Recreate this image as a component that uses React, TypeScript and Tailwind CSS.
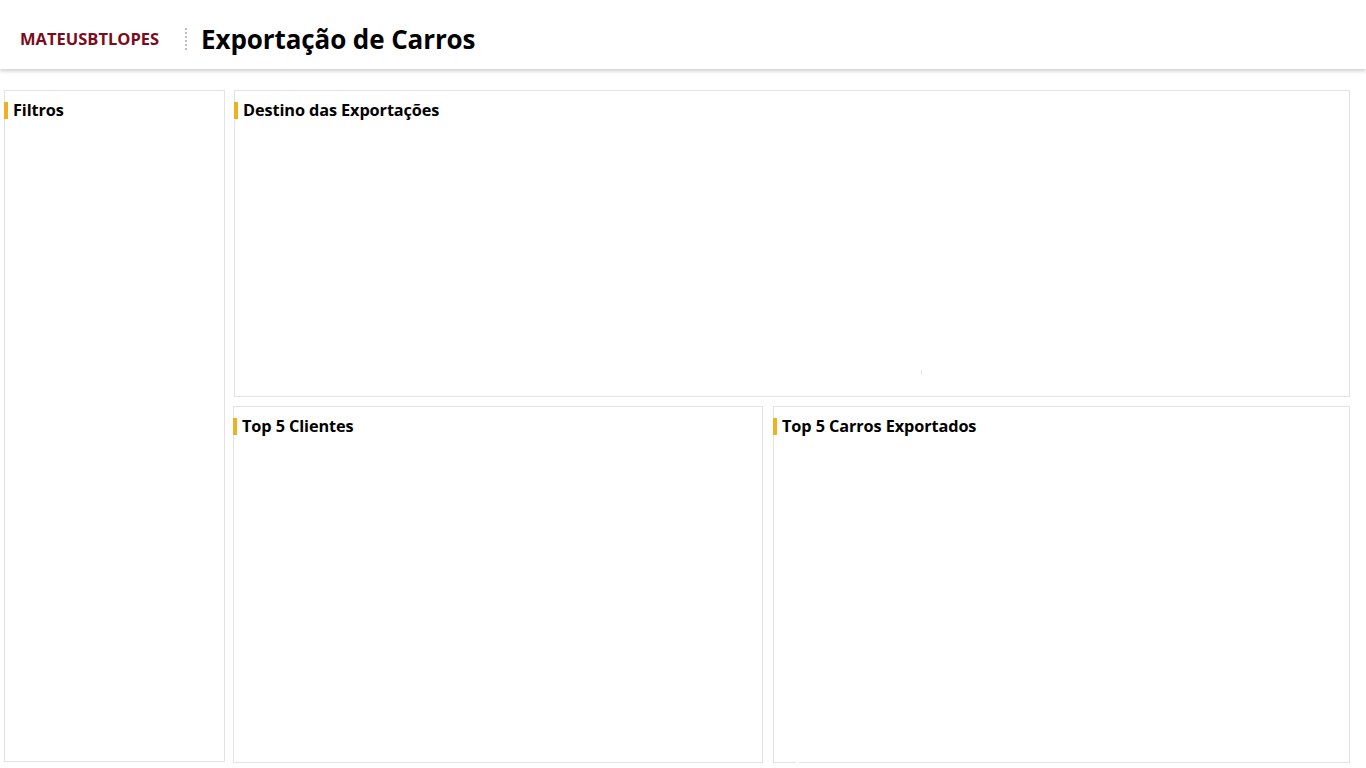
import type { ReactNode } from "react";

const font = { fontFamily: '"Open Sans", "Noto Sans", Arial, sans-serif' };

function Panel({ title, className, children }: { title: string; className?: string; children?: ReactNode }) {
    return (
        <section className={`relative border border-[#e3e3e3] bg-white ${className ?? ""}`}>
            <h2 className="-ml-px mt-[11px] border-l-[4px] border-[#efb122] pl-[5px] text-[16.3px] font-bold leading-[17px] tracking-[-0.1px] text-black">
                {title}
            </h2>
            {children}
        </section>
    );
}

export default function App() {
    return (
        <div className="min-h-[768px] w-full bg-white" style={font}>
            <header className="flex h-[69px] items-center bg-white pl-[20px] pt-[9px] shadow-[0_2px_4px_rgba(0,0,0,0.2)]">
                <span className="text-[16.5px] font-bold text-[#7c0b1c]">MATEUSBTLOPES</span>
                <span className="ml-[26px] h-[22px] border-l-2 border-dotted border-[#bdbdbd]" aria-hidden />
                <h1 className="ml-[14px] text-[26px] font-bold tracking-[-0.1px] text-black">Exportação de Carros</h1>
            </header>

            <main className="flex gap-[8px] pl-[4px] pr-[16px] pt-[21px]">
                <Panel title="Filtros" className="h-[672px] w-[221px] shrink-0" />

                <div className="flex flex-1 flex-col gap-[9px]">
                    <Panel title="Destino das Exportações" className="ml-px h-[307px]">
                        <span className="absolute left-[686px] top-[279px] h-[5px] w-px bg-[#e6e6e6]" aria-hidden />
                    </Panel>
                    <div className="flex gap-[10px]">
                        <Panel title="Top 5 Clientes" className="h-[357px] w-[530px] shrink-0" />
                        <Panel title="Top 5 Carros Exportados" className="h-[357px] flex-1">
                            <span className="absolute -bottom-px left-[22px] h-px w-[3px] bg-white" aria-hidden />
                        </Panel>
                    </div>
                </div>
            </main>
        </div>
    );
}
